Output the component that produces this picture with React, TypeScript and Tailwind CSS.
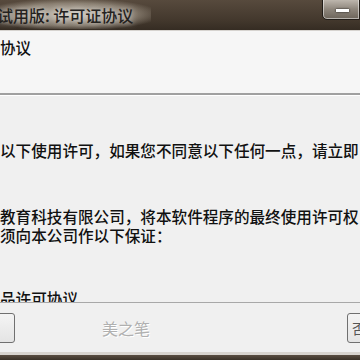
import React from "react";

const cjk = { fontFamily: '"Noto Sans CJK SC", "Noto Sans", sans-serif' };

export default function App() {
  return (
    <div className="flex h-[360px] w-[360px] flex-col overflow-hidden bg-[#f0f0f0]" style={cjk}>
      {/* title bar */}
      <div className="flex h-[30px] shrink-0 items-start justify-between bg-[linear-gradient(to_bottom,#574a3d,#42372c_70%,#352c23)]">
        <div className="-ml-[7px] flex h-[29px] items-center bg-[radial-gradient(ellipse_at_center,rgba(225,220,210,0.85)_0%,rgba(175,165,150,0.6)_55%,rgba(110,100,85,0)_80%)] pl-[4px] pr-[18px]">
          <span className="whitespace-nowrap text-[16px] font-medium leading-none text-[#242220] [text-shadow:0_0_6px_rgba(255,255,255,0.7)]">
            试用版: 许可证协议
          </span>
        </div>
        <div className="-mt-[2px] flex h-[22px] w-[38px] items-center justify-center rounded-bl-[5px] border border-[#221d18] bg-[linear-gradient(to_bottom,#c2bbb2,#8f877d_50%,#6c645a)] shadow-[inset_0_0_0_1px_rgba(255,255,255,0.5)]">
          <div className="ml-[2px] mt-[2px] h-[3px] w-[13px] bg-white shadow-[0_0_2px_#000]" />
        </div>
      </div>

      {/* header */}
      <div className="h-[63px] shrink-0 border-t border-[#d6d3cf] bg-[#f6f6f6] pt-[6px]">
        <div className="whitespace-nowrap text-[15.5px] font-medium leading-[20px] text-[#111]">协议</div>
      </div>
      <div className="h-[2px] shrink-0 bg-[#a0a0a0]" />
      <div className="h-px shrink-0 bg-white" />

      {/* body */}
      <div className="flex h-[206px] shrink-0 flex-col overflow-hidden pt-[45px] text-[15.6px] font-medium leading-[19px] text-[#111]">
        <div className="whitespace-nowrap">以下使用许可，如果您不同意以下任何一点，请立即</div>
        <div className="mt-[47px] whitespace-nowrap">教育科技有限公司，将本软件程序的最终使用许可权</div>
        <div className="whitespace-nowrap">须向本公司作以下保证：</div>
        <div className="mt-[44px] whitespace-nowrap">品许可协议</div>
      </div>

      {/* footer */}
      <div className="h-px shrink-0 bg-[#a8a8a8]" />
      <div className="flex h-[49px] shrink-0 flex-col bg-[#f0f0f0] pt-[10px]">
        <div className="flex h-[30px] items-center">
          <div className="-ml-[10px] h-[30px] w-[25px] shrink-0 rounded-[3px] border border-[#707070] bg-[linear-gradient(to_bottom,#f4f4f4,#e4e4e4)]" />
          <span className="ml-[87px] whitespace-nowrap text-[16px] leading-none text-[#b0b0b0] [text-shadow:1px_1px_0_#ffffff]">
            美之笔
          </span>
          <div className="ml-auto -mr-[20px] flex h-[30px] w-[33px] shrink-0 items-center rounded-[3px] border border-[#707070] bg-[linear-gradient(to_bottom,#f4f4f4,#e4e4e4)] pl-[4px] text-[14px] text-[#555]">
            否
          </div>
        </div>
      </div>
      <div className="h-[3px] shrink-0 bg-[#d8d4cf]" />
      <div className="flex-1 bg-[linear-gradient(to_bottom,#5a4e42,#3a3128)]" />
    </div>
  );
}
